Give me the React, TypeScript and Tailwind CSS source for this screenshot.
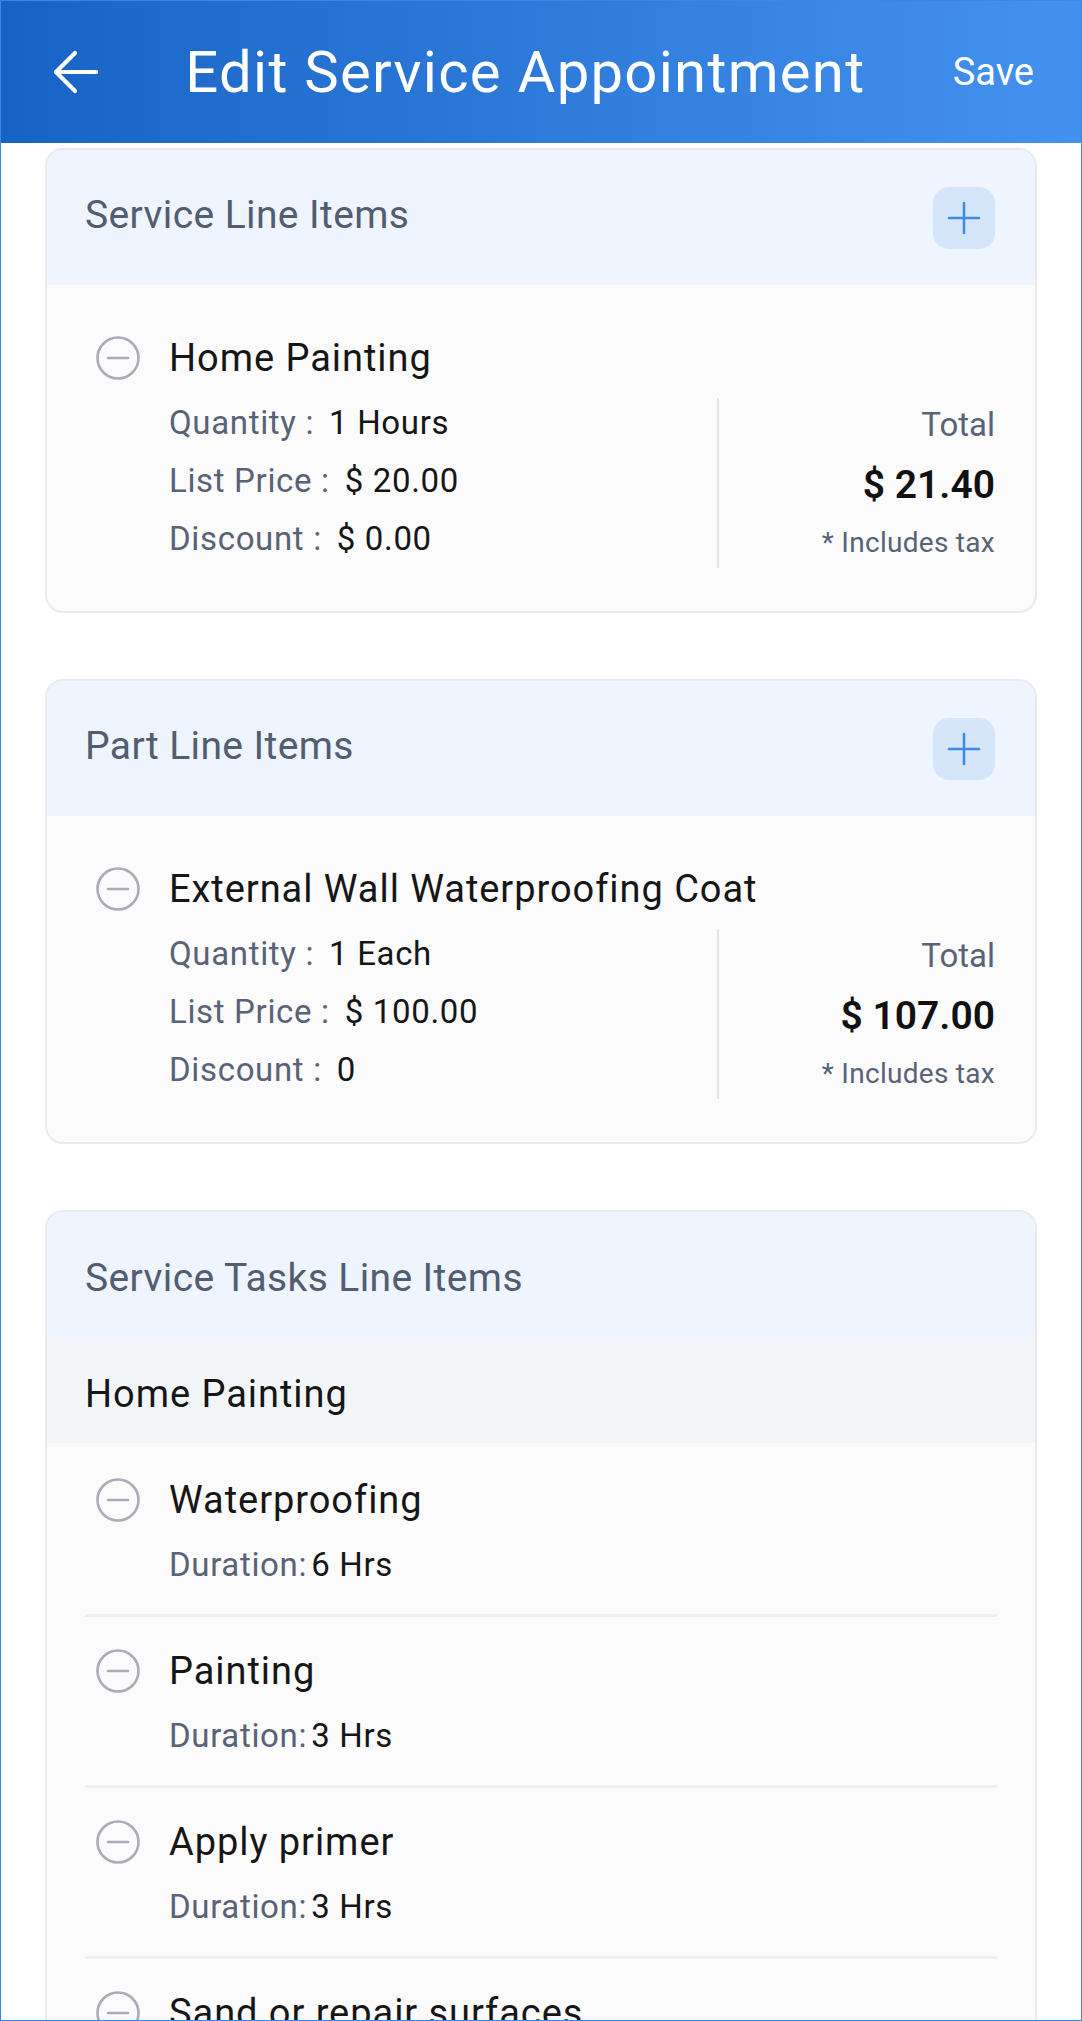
import React from "react";

const MinusCircle = () => (
  <svg width="44" height="44" viewBox="0 0 44 44" className="shrink-0">
    <circle cx="22" cy="22" r="20.5" fill="none" stroke="#a9adb8" strokeWidth="2.6" />
    <line x1="12" y1="22" x2="32" y2="22" stroke="#a9adb8" strokeWidth="2.6" strokeLinecap="round" />
  </svg>
);

const PlusButton = () => (
  <div className="w-[62px] h-[62px] rounded-[16px] bg-[#d6e6fa] flex items-center justify-center">
    <svg width="34" height="34" viewBox="0 0 34 34">
      <line x1="17" y1="2" x2="17" y2="32" stroke="#3f8ce6" strokeWidth="2.6" strokeLinecap="round" />
      <line x1="2" y1="17" x2="32" y2="17" stroke="#3f8ce6" strokeWidth="2.6" strokeLinecap="round" />
    </svg>
  </div>
);

type LineItem = {
  name: string;
  quantity: string;
  listPrice: string;
  discount: string;
  total: string;
};

const Row = ({ label, value }: { label: string; value: string }) => (
  <div className="flex">
    <span className="text-[#596377]">{label}</span>
    <span className="text-[#161616] ml-[15px]">{value}</span>
  </div>
);

const LineItemCard = ({ title, item }: { title: string; item: LineItem }) => (
  <div className="mx-[44px] rounded-[18px] border-2 border-[#e8eaee] overflow-hidden bg-[#fbfbfc]">
    <div className="h-[135px] bg-[#eef5fe] flex items-center justify-between pl-[38px] pr-[40px]">
      <span className="text-[39px] leading-[44px] tracking-[0.01em] text-[#535d72] mb-[5px]">{title}</span>
      <PlusButton />
    </div>
    <div className="pt-[51px] pb-[43px] pl-[49px] pr-[40px]">
      <div className="flex items-center h-[44px]">
        <div className="w-[73px] shrink-0">
          <MinusCircle />
        </div>
        <span className="text-[38px] leading-[44px] tracking-[0.025em] text-[#161616]">{item.name}</span>
      </div>
      <div className="flex mt-[14px] pl-[73px] h-[174px]">
        <div className="flex-1 text-[33px] leading-[58px] tracking-[0.02em]">
          <Row label="Quantity :" value={item.quantity} />
          <Row label="List Price :" value={item.listPrice} />
          <Row label="Discount :" value={item.discount} />
        </div>
        <div className="w-[278px] mt-[4px] border-l-2 border-[#e2e4ea] flex flex-col items-end">
          <span className="text-[33px] leading-[54px] text-[#596377]">Total</span>
          <span className="text-[39px] leading-[66px] font-semibold text-[#111111]">{item.total}</span>
          <span className="text-[28px] leading-[50px] tracking-[0.01em] text-[#596377]">* Includes tax</span>
        </div>
      </div>
    </div>
  </div>
);

const tasks = [
  { name: "Waterproofing", duration: "6 Hrs" },
  { name: "Painting", duration: "3 Hrs" },
  { name: "Apply primer", duration: "3 Hrs" },
  { name: "Sand or repair surfaces", duration: "2 Hrs" },
];

export default function App() {
  return (
    <div
      className="w-[1082px] h-[2021px] overflow-hidden border border-[#3d86e4] bg-white"
      style={{ fontFamily: "Roboto, 'Noto Sans', Arial, sans-serif" }}
    >
      <header className="h-[142px] bg-gradient-to-r from-[#1763c5] to-[#4492ef] flex items-center pl-[51px] pr-[47px] text-white">
        <svg width="46" height="44" viewBox="0 0 46 44" className="shrink-0">
          <line x1="4" y1="22" x2="44" y2="22" stroke="#fff" strokeWidth="4.2" strokeLinecap="round" />
          <polyline points="23,3 4,22 23,41" fill="none" stroke="#fff" strokeWidth="4.2" strokeLinecap="round" strokeLinejoin="round" />
        </svg>
        <h1 className="flex-1 text-center text-[58px] leading-[64px] tracking-[0.022em] font-normal">Edit Service Appointment</h1>
        <span className="text-[38px] leading-[46px]">Save</span>
      </header>

      <div className="mt-[5px] flex flex-col gap-[66px]">
        <LineItemCard
          title="Service Line Items"
          item={{ name: "Home Painting", quantity: "1 Hours", listPrice: "$ 20.00", discount: "$ 0.00", total: "$ 21.40" }}
        />
        <LineItemCard
          title="Part Line Items"
          item={{ name: "External Wall Waterproofing Coat", quantity: "1 Each", listPrice: "$ 100.00", discount: "0", total: "$ 107.00" }}
        />

        <div className="mx-[44px] rounded-[18px] border-2 border-[#e8eaee] overflow-hidden bg-[#fbfbfc]">
          <div className="h-[125px] bg-[#eef5fe] flex items-center pl-[38px] pr-[40px]">
            <span className="text-[39px] leading-[44px] tracking-[0.01em] text-[#535d72] mt-[6px]">Service Tasks Line Items</span>
          </div>
          <div className="h-[106px] bg-[#f3f6f9] flex items-center pl-[38px]">
            <span className="text-[38px] leading-[44px] tracking-[0.025em] text-[#161616] mt-[8px]">Home Painting</span>
          </div>
          <div className="pt-[3px] px-[38px]">
            {tasks.map((t) => (
              <div key={t.name} className="pt-[32px] pb-[27px] border-b-[3px] border-[#edeff3]">
                <div className="flex items-center h-[44px] pl-[11px]">
                  <div className="w-[73px] shrink-0">
                    <MinusCircle />
                  </div>
                  <span className="text-[38px] leading-[44px] tracking-[0.025em] text-[#161616]">{t.name}</span>
                </div>
                <div className="mt-[21px] pl-[84px] text-[33px] leading-[44px] tracking-[0.02em]">
                  <span className="text-[#596377]">Duration:</span>
                  <span className="text-[#161616] ml-[4px]">{t.duration}</span>
                </div>
              </div>
            ))}
          </div>
        </div>
      </div>
    </div>
  );
}
